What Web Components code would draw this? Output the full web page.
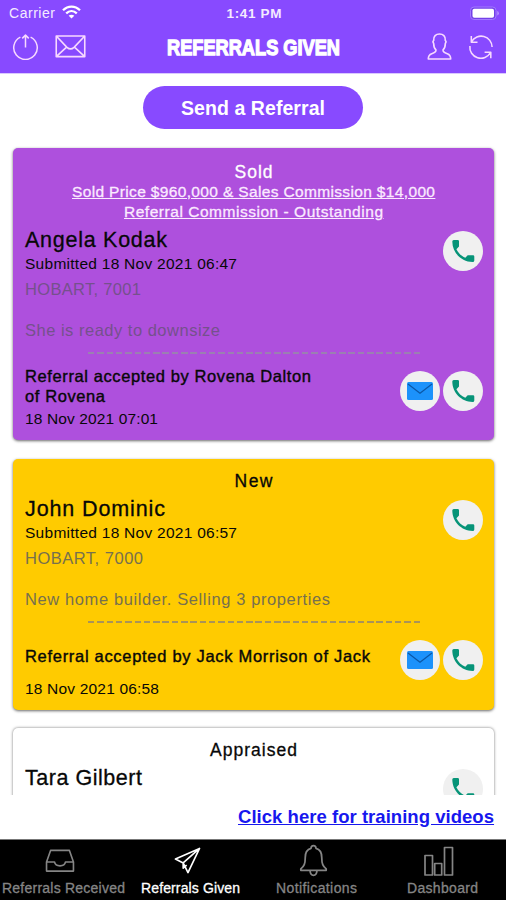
<!DOCTYPE html>
<html lang="en">
<head>
<meta charset="utf-8">
<title>Referrals Given</title>
<style>
html,body{margin:0;height:100%;overflow:hidden;background:#fff}
body{font-family:"Liberation Sans",Arial,sans-serif;color:#080808}
</style>
</head>
<body>
<referrals-app></referrals-app>
<script>
const make = (name, html, after) => customElements.define(name, class extends HTMLElement {
  connectedCallback() {
    if (this.shadowRoot) return;
    const t = document.createElement('template');
    t.innerHTML = html(this);
    this.attachShadow({mode: 'open'}).append(t.content.cloneNode(true));
    if (after) after(this);
  }
});

const icons = {
  share: ['28 28', '<path d="M8.7 4.3A12.2 12.2 0 1 0 19.3 4.3M14 15V2.3M10.6 5.6 14 2.2l3.4 3.4"/>'],
  mail: ['30 24', '<path d="M1.2 1.8h27.6v20H1.2zM1.2 1.8l10.4 11c2.2 2 4.6 2 6.8 0l10.4-11M1.2 21.8l10-9.2M28.8 21.8l-10-9.2"/>'],
  person: ['24 26', '<path d="M8.6 16.2C6.8 14.6 6.4 12 6.4 10c-.8-1-.7-2.2 0-2.8C6 3 8.600 1 12 1s6 2 5.600 6.200c.7.6.8 1.800 0 2.800 0 2-.4 4.600-2.200 6.200-.3 2 .8 2.600 4.100 3.700 2.500.8 3.300 2.100 3.300 5.100H1.200c0-3 .8-4.300 3.300-5.100 3.300-1.100 4.400-1.700 4.100-3.700z"/>'],
  refresh: ['26 26', '<path d="M3.600 7.600A11 11 0 0 1 24.100 13M22.500 18.500A11 11 0 0 1 1.900 12M3.300 2v6.200h6.200M16.600 18.300h6.200v6"/>'],
  phone: ['24 24', '<path stroke="none" fill="#079478" d="M1.300 2.600Q1.300 1 2.700 1H6.700Q8 1 8 2.300V7.500L5.400 10.300C7.500 14.500 10.300 17 14.300 18.700L16.700 16.200H22Q23.300 16.200 23.300 17.500V21.500Q23.300 23 21.600 23C10.400 22.800 1.400 14 1.300 2.600z"/>'],
  envelope: ['26 20', '<rect stroke="none" x="0" y="1" width="26" height="18" rx="1.500" fill="#1c92fb"/><path stroke="#0b57a6" stroke-width="1.200" d="M1 3l12 9.300L25 3"/>'],
  inbox: ['32 26', '<path d="M2 14.500 6.200 2.500H25.800L30 14.500V24H2zM2 14.500H10.300C11.300 20 20.700 20 21.700 14.500H30"/>'],
  plane: ['28 28', '<path d="M26.500 1.500 1.500 12.500 9.500 16.500 14.500 26.500zM26.500 1.500 9.500 16.500V22l3.600-3.200"/>'],
  bell: ['28 32', '<path d="M11.600 4.200C11.600 .7 16.400.7 16.400 4.200 20.400 5.200 22 9 22 13c0 6.500 1.200 8.500 4.300 11.200v1.300H1.700v-1.300C4.800 21.500 6 19.500 6 13c0-4 1.600-7.800 5.600-8.800zM10.600 25.700c.5 6.300 6.300 6.300 6.800 0"/>'],
  chart: ['32 32', '<path d="M2 10.500h7.500V30H2zM11.700 18.500h7V30h-7zM21.500 2.500H29.500V30h-8z"/>']
};
make('app-icon', el => {
  const [vb, body] = icons[el.getAttribute('name')];
  return `<style>:host{display:block;flex:none}svg{display:block;width:100%;height:100%;fill:none;stroke:currentColor;stroke-width:var(--sw,1.55);stroke-linejoin:round}</style><svg viewBox="0 0 ${vb}">${body}</svg>`;
});

make('round-action', el => `<style>:host{display:flex;align-items:center;justify-content:center;width:40px;height:40px;border-radius:50%;background:#f0f0f0;flex:none}
app-icon{width:24px;height:24px}.envelope{width:26px;height:20px}</style><app-icon class="${el.getAttribute('icon')}" name="${el.getAttribute('icon')}"></app-icon>`);

make('status-bar', () => `<style>:host{display:grid;grid-template-columns:1fr auto 1fr;align-items:center;height:26px;padding:0 7px 0 9px;font-size:14px;color:#f4eaff}
.l{display:flex;gap:7px;align-items:center}.wifi{width:19px;height:14px;margin-top:-2px}.r{justify-self:end}
.bat{width:29px;height:14px}svg{display:block}b{font-size:13.500px}</style>
<div class="l"><fit-text w="46">Carrier</fit-text><svg class="wifi" viewBox="0 0 19 14" fill="none" stroke="#fff" stroke-width="2.300"><path d="M1 5.300C6 .4 13 .4 18 5.300M4.200 8.400c3.200-3 7.400-3 10.600 0"/><path d="M9.500 13.500 6.700 10.800c1.600-1.500 4-1.500 5.600 0z" fill="#fff" stroke="none"/></svg></div>
<b><fit-text w="55">1:41 PM</fit-text></b>
<svg class="bat r" viewBox="0 0 29 14"><rect x=".5" y="1" width="25.500" height="12.500" rx="3.500" fill="#7440e8" stroke="#a27aff"/><rect x="2.500" y="2.800" width="21.500" height="9" rx="1.800" fill="#fff"/><path d="M27.300 5v4.500q1.500-.6 1.500-2.250T27.300 5" fill="#b896ff"/></svg>`);

make('nav-bar', () => `<style>:host{display:grid;grid-template-columns:1fr auto 1fr;align-items:center;height:47px;padding:0 12px 0 13px;box-sizing:border-box;color:#f7d9ff}
.g{display:flex;align-items:center}.l{gap:16px;margin-left:-1px}.r{gap:16px;justify-content:flex-end}
h1{margin:0;font-size:22.500px;line-height:41px;height:41px;color:#fff;-webkit-text-stroke:1.300px #fff;font-weight:700}
.g{margin-top:-6px}h1{margin-top:-5px}</style>
<div class="g l"><app-icon name="share" style="width:27px;height:27px"></app-icon><app-icon name="mail" style="width:31px;height:25px"></app-icon></div>
<h1><fit-text w="173" mode="scale">REFERRALS GIVEN</fit-text></h1>
<div class="g r"><app-icon name="person" style="width:25px;height:27px"></app-icon><app-icon name="refresh" style="width:26px;height:26px"></app-icon></div>`);

make('pill-button', () => `<style>:host{display:flex;align-items:center;justify-content:center;box-sizing:border-box;padding-top:1px;width:220px;height:43px;border-radius:22px;background:#884aff;color:#fff;font-weight:700;font-size:19.500px}</style><slot></slot>`);

make('referral-card', () => `<style>
:host{display:block;box-sizing:border-box;background:var(--bg);border-radius:5px;padding:var(--top,11px) 12px 0;flex:none;box-shadow:0 1px 3px rgba(0,0,0,.6)}
.status{font-size:17.500px;line-height:22px;height:22px;text-align:center;-webkit-text-stroke:.3px}
.person{display:grid;grid-template-columns:1fr 40px;margin:3px -1px 0 0}
.name{font-size:21.500px;line-height:28px;height:28px;-webkit-text-stroke:.3px}
.sub{font-size:15.500px;line-height:20px;height:20px}
.place,.note{font-size:16.500px;line-height:24px;height:24px;color:var(--grey,#696969)}
.place{margin-top:3px}.note{margin-top:17px}
.person round-action{margin-top:5px}
.dash{height:2px;width:332px;margin:10px 0 0 63px;background:repeating-linear-gradient(90deg,var(--dash,#9b7fb2) 0 6.500px,transparent 6.500px 9.300px)}
.foot{display:flex;justify-content:space-between;margin-right:-1px}
.acc{font-size:16.500px;line-height:20.300px;margin-top:var(--accgap,12.500px);-webkit-text-stroke:.4px}
.date{font-size:15.500px;line-height:20px;margin-top:var(--dategap,2.900px)}
.acts{display:flex;gap:3px;margin-top:17px}
</style>
<div class="status"><slot name="status"></slot></div><slot name="sale"></slot>
<div class="person"><div><div class="name"><slot name="name"></slot></div><div class="sub"><slot name="submitted"></slot></div></div><round-action icon="phone"></round-action></div>
<div class="place"><slot name="place"></slot></div><div class="note"><slot name="note"></slot></div>
<div class="dash"></div>
<div class="foot"><div><div class="acc"><slot name="accepted"></slot></div><div class="date"><slot name="date"></slot></div></div><div class="acts"><round-action icon="envelope"></round-action><round-action icon="phone"></round-action></div></div>`);

make('sale-details', () => `<style>:host{display:flex;flex-direction:column;align-items:center;font-size:15.500px;line-height:19.500px;margin:-1px 0 4.500px;text-decoration:underline;-webkit-text-stroke:.3px;color:#fbeaff}
::slotted(*){text-decoration:underline}</style><slot></slot>`);

make('tab-item', el => `<style>:host{display:flex;flex-direction:column;align-items:center;color:#858585;font-size:14px;-webkit-text-stroke:.3px}
:host([active]){color:#fff}.i{height:41px;display:flex;align-items:center;margin-left:-7px}
app-icon{--sw:1.700;width:${el.getAttribute('iw')}px;height:${el.getAttribute('ih')}px}.t{line-height:15px;height:15px}</style>
<div class="i"><app-icon name="${el.getAttribute('icon')}"></app-icon></div><div class="t"><slot></slot></div>`);

make('tab-bar', () => `<style>:host{display:grid;grid-template-columns:127px 127px 125px 127px;background:#000;height:61px;box-sizing:border-box;border-top:1.500px solid #777;flex:none}</style>
<tab-item icon="inbox" iw="32" ih="25"><fit-text w="123">Referrals Received</fit-text></tab-item>
<tab-item icon="plane" iw="27" ih="27" active><fit-text w="99">Referrals Given</fit-text></tab-item>
<tab-item icon="bell" iw="29" ih="33"><fit-text w="81">Notifications</fit-text></tab-item>
<tab-item icon="chart" iw="32" ih="32"><fit-text w="71">Dashboard</fit-text></tab-item>`);

make('referrals-app', () => `<style>
:host{display:flex;flex-direction:column;width:506px;height:900px;background:#fff}
header{background:#884aff;height:73px;flex:none;border-bottom:1px solid #d9c8ff}
.top{display:flex;justify-content:center;padding:12px 0 13px}
.list{flex:none;display:flex;flex-direction:column;gap:19px;padding:6px 12px 0 13px;overflow:hidden;height:647px}
.sold{--bg:#ae50dd;--top:13px;--grey:#75518c;height:292px}
.new{--bg:#ffcb00;--grey:#77704e;--dash:#a99358;--accgap:23px;--dategap:13.200px;height:251px}
.app{--bg:#fff;height:251px;margin-top:-1px;box-shadow:0 0 3px rgba(0,0,0,.55)}
.w{color:#fff}
.link{flex:1;display:flex;justify-content:flex-end;padding:10px 12px 0 0;font-weight:700;font-size:18.500px;line-height:23px}
.link a{color:#1717ee;text-decoration:underline}
</style>
<header><status-bar></status-bar><nav-bar></nav-bar></header>
<div class="top"><pill-button><fit-text w="144">Send a Referral</fit-text></pill-button></div>
<main class="list">
<referral-card class="sold"><fit-text slot="status" class="w" w="38">Sold</fit-text>
<sale-details slot="sale"><fit-text w="363">Sold Price $960,000 &amp; Sales Commission $14,000</fit-text><fit-text w="259">Referral Commission - Outstanding</fit-text></sale-details>
<fit-text slot="name" w="142">Angela Kodak</fit-text><fit-text slot="submitted" w="212">Submitted 18 Nov 2021 06:47</fit-text>
<fit-text slot="place" w="116">HOBART, 7001</fit-text><fit-text slot="note" w="195">She is ready to downsize</fit-text>
<div slot="accepted"><fit-text w="286">Referral accepted by Rovena Dalton</fit-text><br><fit-text w="80">of Rovena</fit-text></div>
<fit-text slot="date" w="133">18 Nov 2021 07:01</fit-text></referral-card>
<referral-card class="new"><fit-text slot="status" w="38">New</fit-text>
<fit-text slot="name" w="140">John Dominic</fit-text><fit-text slot="submitted" w="212">Submitted 18 Nov 2021 06:57</fit-text>
<fit-text slot="place" w="118">HOBART, 7000</fit-text><fit-text slot="note" w="305">New home builder. Selling 3 properties</fit-text>
<fit-text slot="accepted" w="345">Referral accepted by Jack Morrison of Jack</fit-text>
<fit-text slot="date" w="134">18 Nov 2021 06:58</fit-text></referral-card>
<referral-card class="app"><fit-text slot="status" w="87">Appraised</fit-text><fit-text slot="name" w="117">Tara Gilbert</fit-text></referral-card>
</main>
<div class="link"><a><fit-text w="256">Click here for training videos</fit-text></a></div>
<tab-bar></tab-bar>`);

// Single line of text tracked (or condensed) to a given width.
make('fit-text', () => `<style>:host{display:inline-block;white-space:nowrap;text-decoration:inherit;vertical-align:top}span{display:inline-block;text-decoration:inherit;transform-origin:0 50%}</style><span><slot></slot></span>`, el => {
  const w = +el.getAttribute('w'), s = el.shadowRoot.querySelector('span');
  const natural = s.getBoundingClientRect().width;
  if (el.getAttribute('mode') === 'scale') s.style.transform = `scaleX(${w / natural})`;
  else {
    const ls = (w - natural) / (el.textContent.length - 1);
    s.style.letterSpacing = ls + 'px';
    s.style.marginRight = -ls + 'px';
  }
  el.style.width = w + 'px';
});
</script>
</body>
</html>
